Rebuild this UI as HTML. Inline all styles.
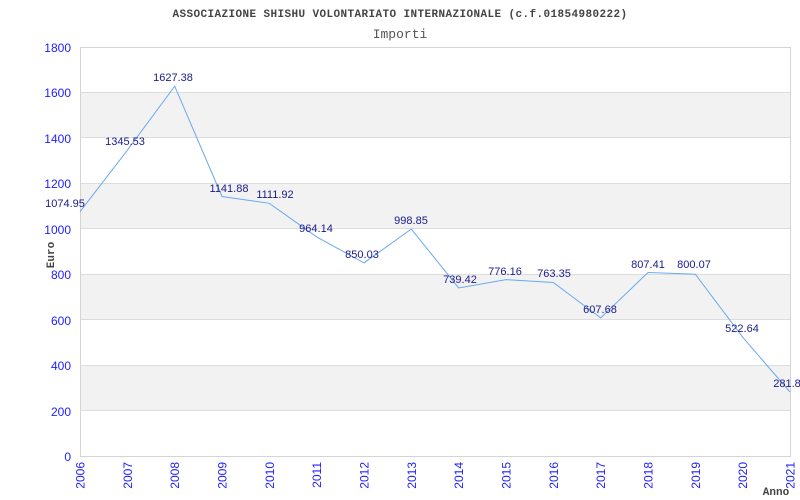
<!DOCTYPE html>
<html><head><style>html,body{margin:0;padding:0;background:#fff}svg{display:block}</style></head><body>
<svg width="800" height="500" xmlns="http://www.w3.org/2000/svg">
<rect width="800" height="500" fill="#fff"/>
<g fill="#f2f2f2">
<rect x="80" y="92.4" width="710" height="45.4"/>
<rect x="80" y="183.3" width="710" height="45.4"/>
<rect x="80" y="274.2" width="710" height="45.4"/>
<rect x="80" y="365.1" width="710" height="45.4"/>
</g>
<g stroke="#dcdcdc" stroke-width="1">
<line x1="80" y1="92.5" x2="790" y2="92.5"/><line x1="80" y1="137.5" x2="790" y2="137.5"/>
<line x1="80" y1="183.5" x2="790" y2="183.5"/><line x1="80" y1="228.5" x2="790" y2="228.5"/>
<line x1="80" y1="274.5" x2="790" y2="274.5"/><line x1="80" y1="319.5" x2="790" y2="319.5"/>
<line x1="80" y1="365.5" x2="790" y2="365.5"/><line x1="80" y1="410.5" x2="790" y2="410.5"/>
</g>
<rect x="80.5" y="47.5" width="710" height="409" fill="none" stroke="#d4d4d4"/>
<polyline fill="none" stroke="#6aa8f0" stroke-width="1" points="80,211.7 127.3,150.3 174.7,86.2 222,196.5 269.3,203.3 316.7,236.9 364,262.9 411.3,229 458.7,288 506,279.6 553.3,282.5 600.7,317.9 648,272.5 695.3,274.2 742.7,337.2 790,392"/>
<g font-family="Liberation Mono, monospace" fill="#444" text-anchor="middle">
<text x="400" y="17" font-size="11" font-weight="bold" letter-spacing="0.4">ASSOCIAZIONE SHISHU VOLONTARIATO INTERNAZIONALE (c.f.01854980222)</text>
<text x="400" y="38" font-size="13" fill="#555">Importi</text>
<text x="54" y="255" font-size="11" font-weight="bold" transform="rotate(-90 54 255)">Euro</text>
<text x="776" y="495" font-size="11" font-weight="bold">Anno</text>
</g>
<g font-family="Liberation Sans, sans-serif" font-size="12" fill="#2020ff" text-anchor="end">
<text x="71" y="52">1800</text><text x="71" y="97">1600</text><text x="71" y="143">1400</text>
<text x="71" y="188">1200</text><text x="71" y="234">1000</text><text x="71" y="279">800</text>
<text x="71" y="325">600</text><text x="71" y="370">400</text><text x="71" y="416">200</text>
<text x="71" y="461">0</text>
</g>
<g font-family="Liberation Sans, sans-serif" font-size="12" fill="#2020ff" text-anchor="end">
<text transform="translate(84.5,462) rotate(-90)">2006</text>
<text transform="translate(131.8,462) rotate(-90)">2007</text>
<text transform="translate(179.2,462) rotate(-90)">2008</text>
<text transform="translate(226.5,462) rotate(-90)">2009</text>
<text transform="translate(273.8,462) rotate(-90)">2010</text>
<text transform="translate(321.2,462) rotate(-90)">2011</text>
<text transform="translate(368.5,462) rotate(-90)">2012</text>
<text transform="translate(415.8,462) rotate(-90)">2013</text>
<text transform="translate(463.2,462) rotate(-90)">2014</text>
<text transform="translate(510.5,462) rotate(-90)">2015</text>
<text transform="translate(557.8,462) rotate(-90)">2016</text>
<text transform="translate(605.2,462) rotate(-90)">2017</text>
<text transform="translate(652.5,462) rotate(-90)">2018</text>
<text transform="translate(699.8,462) rotate(-90)">2019</text>
<text transform="translate(747.2,462) rotate(-90)">2020</text>
<text transform="translate(794.5,462) rotate(-90)">2021</text>
</g>
<g font-family="Liberation Sans, sans-serif" font-size="11" fill="#1a1a8c" text-anchor="middle">
<text x="65" y="207">1074.95</text>
<text x="125" y="145">1345.53</text>
<text x="173" y="81">1627.38</text>
<text x="229" y="192">1141.88</text>
<text x="275" y="198">1111.92</text>
<text x="316" y="232">964.14</text>
<text x="362" y="258">850.03</text>
<text x="411" y="224">998.85</text>
<text x="460" y="283">739.42</text>
<text x="505" y="275">776.16</text>
<text x="554" y="277">763.35</text>
<text x="600" y="313">607.68</text>
<text x="648" y="268">807.41</text>
<text x="694" y="268">800.07</text>
<text x="742" y="332">522.64</text>
<text x="787" y="387">281.8</text>
</g>
</svg>
</body></html>
